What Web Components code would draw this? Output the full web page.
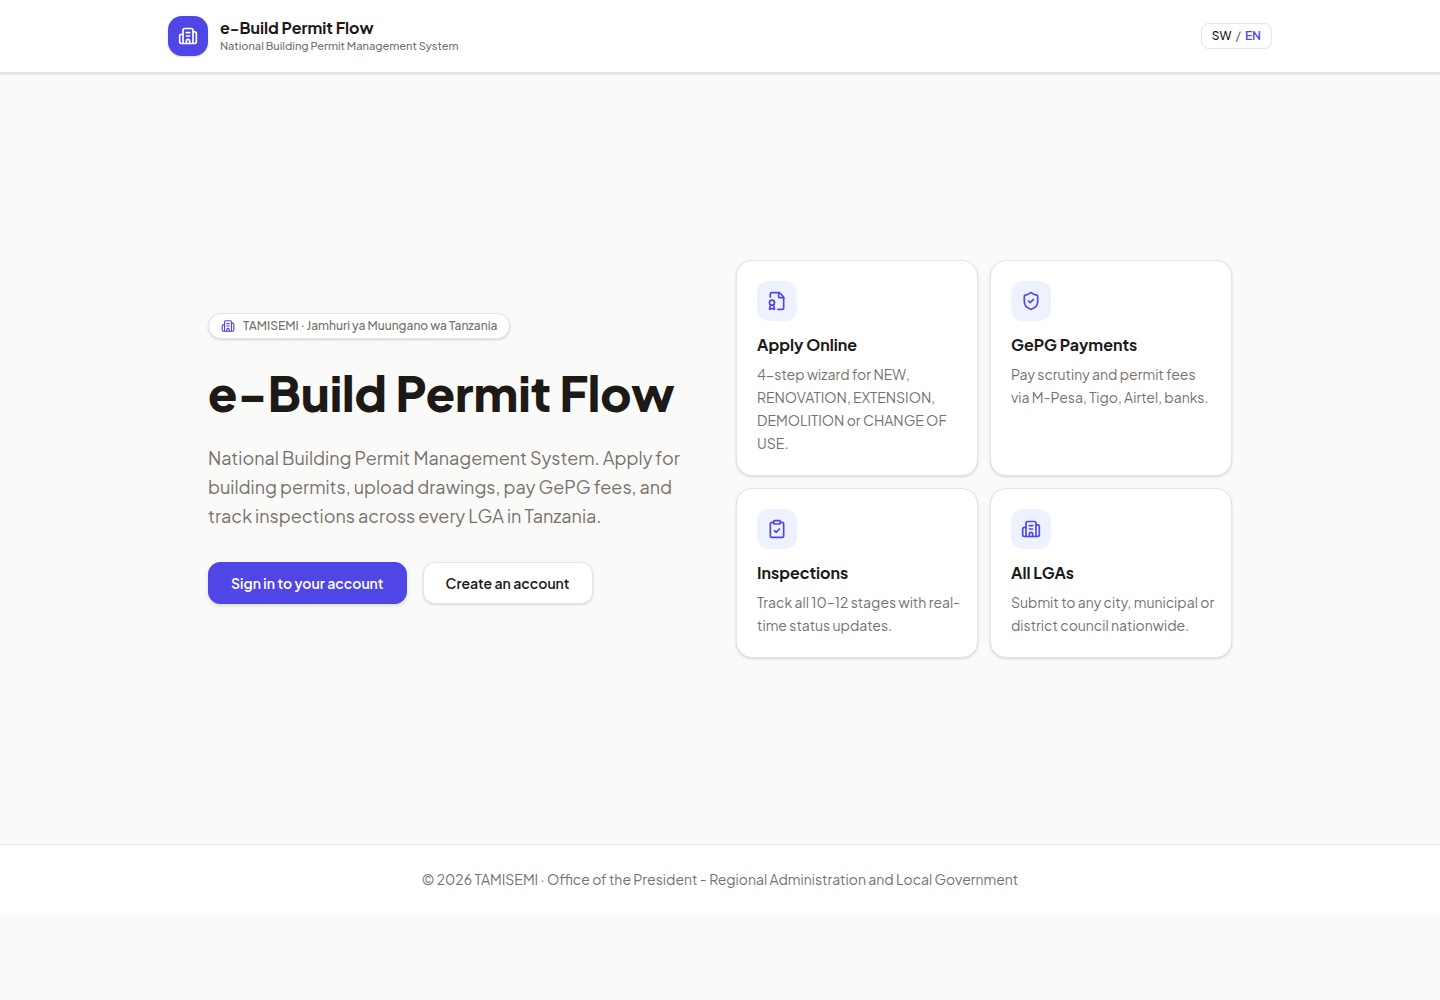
<!DOCTYPE html>
<html lang="en">
<head>
<meta charset="utf-8">
<meta name="viewport" content="width=device-width, initial-scale=1">
<title>e-Build Permit Flow</title>
<style>
    :root {
        --bg: #fafaf9;
        --surface: #ffffff;
        --text: #1c1917;
        --muted: #78716c;
        --border: #e5e5e5;
        --brand: #4f46e5;
        --brand-soft: #eef2ff;
        --shadow: 0 1px 3px rgba(0, 0, 0, .1), 0 1px 2px rgba(0, 0, 0, .06);
    }

    body {
        margin: 0;
        background: var(--bg);
        color: var(--text);
        font-family: "Plus Jakarta Sans", Inter, "Liberation Sans", sans-serif;
        font-size: 14px;
    }
</style>
</head>
<body>
<permit-app></permit-app>

<script>
'use strict';

(function () {
    // 24x24 stroke icons
    const ICONS = {
        building: `
            <path d="M10 12h4"/><path d="M10 8h4"/>
            <path d="M14 21v-3a2 2 0 0 0-4 0v3"/>
            <path d="M6 10H4a2 2 0 0 0-2 2v7a2 2 0 0 0 2 2h16a2 2 0 0 0 2-2V9a2 2 0 0 0-2-2h-2"/>
            <path d="M6 21V5a2 2 0 0 1 2-2h8a2 2 0 0 1 2 2v16"/>`,
        badge: `
            <path d="M13 22h5a2 2 0 0 0 2-2V8a2.4 2.4 0 0 0-.706-1.706l-3.588-3.588A2.4 2.4 0 0 0 14 2H6a2 2 0 0 0-2 2v3.3"/>
            <path d="M14 2v5a1 1 0 0 0 1 1h5"/>
            <path d="m7.69 16.479 1.29 4.88a.5.5 0 0 1-.698.591l-1.843-.849a1 1 0 0 0-.879.001l-1.846.85a.5.5 0 0 1-.692-.593l1.29-4.88"/>
            <circle cx="6" cy="14" r="3"/>`,
        shield: `
            <path d="M20 13c0 5-3.5 7.5-7.66 8.95a1 1 0 0 1-.67-.01C7.5 20.5 4 18 4 13V6a1 1 0 0 1 1-1c2 0 4.5-1.2 6.24-2.72a1.17 1.17 0 0 1 1.52 0C14.51 3.81 17 5 19 5a1 1 0 0 1 1 1z"/>
            <path d="m9 12 2 2 4-4"/>`,
        clipboard: `
            <rect width="8" height="4" x="8" y="2" rx="1" ry="1"/>
            <path d="M16 4h2a2 2 0 0 1 2 2v14a2 2 0 0 1-2 2H6a2 2 0 0 1-2-2V6a2 2 0 0 1 2-2h2"/>
            <path d="m9 14 2 2 4-4"/>`
    };

    class PermitIcon extends HTMLElement {
        constructor() {
            super();
            this.attachShadow({ mode: 'open' });
        }

        connectedCallback() {
            this.shadowRoot.innerHTML = `
                <style>
                    :host { display: block; width: 20px; height: 20px; flex: none; }
                    svg { display: block; width: 100%; height: 100%; }
                </style>
                <svg viewBox="0 0 24 24" fill="none" stroke="currentColor" stroke-width="2"
                     stroke-linecap="round" stroke-linejoin="round" aria-hidden="true">
                    ${ICONS[this.getAttribute('name')]}
                </svg>
            `;
        }
    }

    class PermitHeader extends HTMLElement {
        constructor() {
            super();
            const shadow = this.attachShadow({ mode: 'open' });

            shadow.innerHTML = `
                <style>
                    :host {
                        display: block;
                        background: var(--surface);
                        border-bottom: 1px solid var(--border);
                        box-shadow: var(--shadow);
                    }

                    header {
                        display: flex;
                        align-items: center;
                        justify-content: space-between;
                        box-sizing: border-box;
                        max-width: 1152px;
                        margin: 0 auto;
                        padding: 16px 24px;
                    }

                    .brand {
                        display: flex;
                        align-items: center;
                        gap: 12px;
                        color: inherit;
                        text-decoration: none;
                    }

                    .logo {
                        display: grid;
                        place-items: center;
                        width: 40px;
                        height: 40px;
                        border-radius: 14px;
                        background: var(--brand);
                        color: #ffffff;
                        box-shadow: var(--shadow);
                    }

                    .name {
                        display: block;
                        font-size: 16px;
                        font-weight: 700;
                        line-height: 20px;
                    }

                    .tagline {
                        display: block;
                        color: var(--muted);
                        font-size: 11px;
                        font-weight: 500;
                        line-height: 16px;
                    }

                    button {
                        display: flex;
                        gap: 4px;
                        padding: 4px 10px;
                        border: 1px solid var(--border);
                        border-radius: 8px;
                        background: var(--surface);
                        color: var(--text);
                        font: inherit;
                        font-size: 12px;
                        font-weight: 500;
                        line-height: 16px;
                        cursor: pointer;
                    }

                    .sep { color: var(--muted); }
                    .current { color: var(--brand); font-weight: 600; }
                </style>
                <header>
                    <a class="brand" href="#">
                        <span class="logo"><permit-icon name="building"></permit-icon></span>
                        <span>
                            <span class="name">e-Build Permit Flow</span>
                            <span class="tagline">National Building Permit Management System</span>
                        </span>
                    </a>
                    <button type="button"><span>SW</span> <span class="sep">/</span> <span class="current">EN</span></button>
                </header>
            `;
        }
    }

    class PermitHero extends HTMLElement {
        constructor() {
            super();
            const shadow = this.attachShadow({ mode: 'open' });

            shadow.innerHTML = `
                <style>
                    :host { display: block; }

                    .badge {
                        display: inline-flex;
                        align-items: center;
                        gap: 8px;
                        padding: 4px 12px;
                        border: 1px solid var(--border);
                        border-radius: 14px;
                        background: var(--surface);
                        box-shadow: var(--shadow);
                        color: var(--muted);
                        font-size: 12px;
                        font-weight: 500;
                        line-height: 16px;
                        vertical-align: top;
                    }

                    .badge permit-icon {
                        width: 14px;
                        height: 14px;
                        color: var(--brand);
                    }

                    h1 {
                        margin: 24px 0 20px;
                        font-size: 48px;
                        font-weight: 800;
                        line-height: 60px;
                    }

                    p {
                        margin: 0 0 32px;
                        color: var(--muted);
                        font-size: 18px;
                        line-height: 29px;
                    }

                    .actions {
                        display: flex;
                        flex-wrap: wrap;
                        gap: 16px;
                    }

                    .actions a {
                        padding: 10px 22px;
                        border: 1px solid var(--border);
                        border-radius: 12px;
                        background: var(--surface);
                        box-shadow: var(--shadow);
                        color: var(--text);
                        font-weight: 600;
                        line-height: 20px;
                        text-decoration: none;
                    }

                    .actions .primary {
                        border-color: var(--brand);
                        background: var(--brand);
                        color: #ffffff;
                        box-shadow: 0 2px 4px rgba(0, 0, 0, .12);
                    }
                </style>
                <div class="badge">
                    <permit-icon name="building"></permit-icon>
                    <span><slot name="badge"></slot></span>
                </div>
                <h1><slot name="title"></slot></h1>
                <p><slot></slot></p>
                <div class="actions">
                    <a class="primary" href="#login">Sign in to your account</a>
                    <a href="#register">Create an account</a>
                </div>
            `;
        }
    }

    class FeatureCard extends HTMLElement {
        constructor() {
            super();
            this.attachShadow({ mode: 'open' });
        }

        connectedCallback() {
            this.shadowRoot.innerHTML = `
                <style>
                    :host {
                        display: block;
                        padding: 20px 16px 20px 20px;
                        border: 1px solid var(--border);
                        border-radius: 16px;
                        background: var(--surface);
                        box-shadow: var(--shadow);
                    }

                    .icon {
                        display: grid;
                        place-items: center;
                        width: 40px;
                        height: 40px;
                        border-radius: 12px;
                        background: var(--brand-soft);
                        color: var(--brand);
                    }

                    h3 {
                        margin: 12px 0 6px;
                        font-size: 16px;
                        font-weight: 700;
                        line-height: 24px;
                    }

                    p {
                        margin: 0;
                        color: var(--muted);
                        line-height: 23px;
                    }
                </style>
                <div class="icon"><permit-icon name="${this.getAttribute('icon')}"></permit-icon></div>
                <h3>${this.getAttribute('heading')}</h3>
                <p><slot></slot></p>
            `;
        }
    }

    class PermitFooter extends HTMLElement {
        constructor() {
            super();
            const shadow = this.attachShadow({ mode: 'open' });

            shadow.innerHTML = `
                <style>
                    :host {
                        display: block;
                        border-top: 1px solid var(--border);
                        background: var(--surface);
                    }

                    footer {
                        padding: 24px;
                        color: var(--muted);
                        line-height: 20px;
                        text-align: center;
                    }
                </style>
                <footer><slot></slot></footer>
            `;
        }
    }

    class PermitApp extends HTMLElement {
        constructor() {
            super();
            const shadow = this.attachShadow({ mode: 'open' });

            shadow.innerHTML = `
                <style>
                    :host { display: block; }

                    main {
                        display: grid;
                        grid-template-columns: 1fr 1fr;
                        align-items: center;
                        gap: 32px;
                        box-sizing: border-box;
                        max-width: 1072px;
                        min-height: calc(100vh - 229px);
                        margin: 0 auto;
                        padding: 48px 24px;
                    }

                    .features {
                        display: grid;
                        grid-template-columns: 1fr 1fr;
                        gap: 12px;
                    }

                    @media (max-width: 900px) {
                        main { grid-template-columns: 1fr; }
                    }
                </style>
                <permit-header></permit-header>
                <main>
                    <permit-hero>
                        <span slot="badge">TAMISEMI · Jamhuri ya Muungano wa Tanzania</span>
                        <span slot="title">e-Build Permit Flow</span>
                        National Building Permit Management System. Apply for building permits, upload drawings, pay GePG fees, and track inspections across every LGA in Tanzania.
                    </permit-hero>
                    <section class="features">
                        <feature-card icon="badge" heading="Apply Online">4-step wizard for NEW, RENOVATION, EXTENSION, DEMOLITION or CHANGE OF USE.</feature-card>
                        <feature-card icon="shield" heading="GePG Payments">Pay scrutiny and permit fees via M-Pesa, Tigo, Airtel, banks.</feature-card>
                        <feature-card icon="clipboard" heading="Inspections">Track all 10–12 stages with real-time status updates.</feature-card>
                        <feature-card icon="building" heading="All LGAs">Submit to any city, municipal or district council nationwide.</feature-card>
                    </section>
                </main>
                <permit-footer>© 2026 TAMISEMI · Office of the President - Regional Administration and Local Government</permit-footer>
            `;
        }
    }

    customElements.define('permit-icon', PermitIcon);
    customElements.define('permit-header', PermitHeader);
    customElements.define('permit-hero', PermitHero);
    customElements.define('feature-card', FeatureCard);
    customElements.define('permit-footer', PermitFooter);
    customElements.define('permit-app', PermitApp);
})();
</script>
</body>
</html>
